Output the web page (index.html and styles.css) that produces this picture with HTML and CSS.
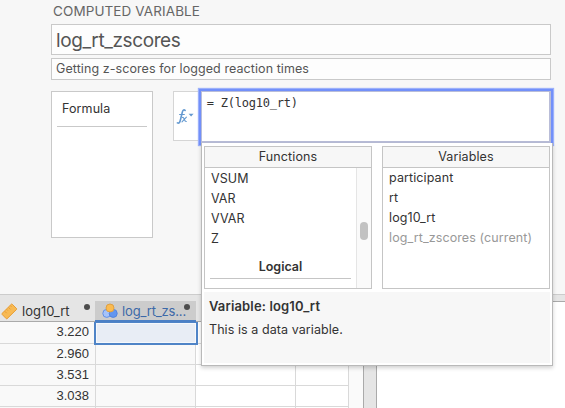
FILE: index.html
```html
<!DOCTYPE html>
<html lang="en">
<head>
<meta charset="utf-8">
<title>Computed variable</title>
<link rel="stylesheet" href="styles.css">
</head>
<body>
<section class="editor">
  <h1 class="heading"><span>COMPUTED VARIABLE</span></h1>
  <div class="field name"><span>log_rt_zscores</span></div>
  <div class="field desc"><span>Getting z-scores for logged reaction times</span></div>
  <div class="work">
    <div class="options"><div class="option"><span>Formula</span></div></div>
    <div class="fx">
      <svg width="18" height="20" viewBox="0 0 18 20">
        <g fill="none" stroke="#6499d0" stroke-linecap="round">
          <path d="M9.1 3.4C7.8 2.3 6.8 3.3 6.3 5.3L4.2 13.7C3.7 15.8 2.8 16.6 1.4 15.9" stroke-width="1.6"/>
          <path d="M3.6 7.5H8.3" stroke-width="1.2"/>
          <path d="M6.4 10.4C8.3 9.6 8.1 14.9 10.3 14.5M10.4 10.2L6 14.8" stroke-width="1.1"/>
        </g>
        <path d="M12.6 6.8h5l-2.5 2.8z" fill="#6499d0"/>
      </svg>
    </div>
    <div class="formula"><span>= Z(log10_rt)</span></div>
  </div>
</section>
<section class="lower">
  <div class="sheet">
    <div class="headers">
      <div class="col-head first">
        <svg width="17" height="17" viewBox="0 0 17 17">
          <path d="M11.2 1.2L15.6 5.6Q16 6 15.6 6.4L6.1 15.7Q5.7 16 5.3 15.7L1 11.3Q.7 10.9 1 10.5L10.4 1.2Q10.8.8 11.2 1.2z" fill="#f8ba54" stroke="#e79e36"/>
          <path d="M3.7 8.2l2 2M5.6 6.3l1.3 1.3M7.5 4.4l2 2M9.3 2.6l1.3 1.3" stroke="#e79e36"/>
        </svg>
        <span class="label">log10_rt</span><i class="dot"></i>
      </div>
      <div class="col-head selected">
        <svg width="16" height="16" viewBox="0 0 16 16">
          <circle cx="4.8" cy="10.4" r="4" fill="#a5c3fa" stroke="#6590e5"/>
          <circle cx="11.2" cy="10.4" r="4" fill="#6396ef" stroke="#5584dd"/>
          <circle cx="8" cy="5" r="4" fill="#fbbb50" stroke="#dda044"/>
        </svg>
        <span class="label">log_rt_zs...</span><i class="dot"></i>
      </div>
    </div>
    <div class="grid">
      <div class="num"><span>3.220</span></div><div class="calc active"></div><div></div><div></div>
      <div class="num"><span>2.960</span></div><div class="calc"></div><div></div><div></div>
      <div class="num"><span>3.531</span></div><div class="calc"></div><div></div><div></div>
      <div class="num"><span>3.038</span></div><div class="calc"></div><div></div><div></div>
      <div class="num"></div><div class="calc"></div><div></div><div></div>
    </div>
  </div>
  <div class="splitter"></div>
  <div class="results"></div>
</section>
<div class="popup">
  <div class="lists">
    <div class="list">
      <div class="list-head"><span>Functions</span></div>
      <div class="scroll">
        <div class="items">
          <div class="item">VSUM</div><div class="item">VAR</div><div class="item">VVAR</div><div class="item">Z</div>
          <div class="group">Logical</div>
        </div>
        <div class="track"><div class="thumb"></div></div>
      </div>
    </div>
    <div class="list">
      <div class="list-head"><span>Variables</span></div>
      <div class="vars">
        <div class="item">participant</div><div class="item">rt</div><div class="item">log10_rt</div><div class="item current">log_rt_zscores (current)</div>
      </div>
    </div>
  </div>
  <div class="info"><b>Variable: log10_rt</b><p>This is a data variable.</p></div>
</div>
</body>
</html>
```

FILE: styles.css
```css
* { box-sizing: border-box; }
body {
  margin: 0;
  width: 565px;
  height: 408px;
  overflow: hidden;
  position: relative;
  background: #fff;
  color: #333;
  font: 13px/20px Inter, sans-serif;
}
.editor { height: 294px; background: #f7f7f7; padding: 0 14px 0 51px; }
.heading { margin: 0; height: 24px; padding-left: 2px; font-size: 13.5px; line-height: 23px; font-weight: 400; letter-spacing: .1px; color: #666; }
.field { border: 1px solid #c9c9c9; background: #fdfdfd; color: #555; padding-left: 4px; white-space: nowrap; }
.name { height: 31px; font-size: 19px; line-height: 31px; letter-spacing: -.4px; }
.desc { height: 22px; margin-top: 3px; font-size: 12.5px; line-height: 20px; letter-spacing: .08px; }
.work { display: flex; margin-top: 11px; }
.options { width: 102px; height: 147px; border: 1px solid #c9c9c9; background: #fff; padding: 5px; margin-right: 20px; }
.option { height: 30px; border-bottom: 1px solid #c9c9c9; padding-left: 5px; line-height: 23px; font-size: 12.5px; letter-spacing: .1px; }
.fx { width: 28px; height: 50px; border: 1px solid #d5d5d5; border-right: 0; background: #fff; padding: 15px 0 0 2px; }
.formula {
  width: 351px;
  height: 52px;
  border: solid #b9bdd8;
  border-width: 1px 2px 2px 1px;
  box-shadow: 0 0 0 2px #7290fa, 0 0 1px 3px #9cb0fa;
  background: #fff;
  padding-left: 5px;
  font: 12px/23px "DejaVu Sans Mono", monospace;
  letter-spacing: -.22px;
}
.lower { display: flex; height: 114px; }
.sheet { width: 363px; background: #fafafa; }
.headers { display: flex; height: 28px; background: #e5e5e5; border-top: 1px solid #ccc; border-bottom: 1px solid #aaa; }
.col-head { display: flex; align-items: center; position: relative; height: 26px; line-height: 20px; padding-top: 6px; }
.col-head svg { flex: none; }
.first { width: 95px; padding-left: 1px; gap: 4px; }
.selected { width: 101px; margin-top: 6px; height: 21px; padding: 0 0 0 7px; gap: 4px; background: #ccc; border-bottom: 2px solid #4b80c5; color: #3c69a8; letter-spacing: -.15px; }
.dot { position: absolute; width: 6px; height: 6px; border-radius: 50%; background: #4d4d4d; right: 5px; top: 9px; }
.selected .dot { top: 3px; right: 6px; }
.grid { display: grid; grid-template-columns: 96px 100px 100px 53px; grid-template-rows: 22px 21px 21px 21px 21px; height: 86px; overflow: hidden; }
.grid > div { background: #fff; border-right: 1px solid #d9d9d9; border-bottom: 1px solid #d9d9d9; }
.grid > .num { background: #f9f9f9; text-align: right; padding-right: 6px; font-family: "Liberation Sans", sans-serif; line-height: 20px; }
.grid > .calc { background: #f9f9f9; }
.grid > .active { background: #e8edf5; outline: 2px solid #4f84c7; outline-offset: -1px; box-shadow: inset 0 0 0 2px #f5f8fc; margin: 0 -1px 0 -1px; z-index: 1; border: 0; }
.splitter { width: 14px; background: #e5e5e5; border-left: 1px solid #aaa; border-right: 1px solid #aaa; }
.results { flex: 1; border-top: 1px solid #ccc; box-shadow: inset 0 6px #e5e5e5, inset 0 7px #aaa; }
.popup {
  position: absolute;
  left: 201px;
  top: 143px;
  width: 352px;
  height: 223px;
  padding: 3px 2px 2px;
  background: #fff;
  border: 1px solid #b9b9b9;
  border-top: 0;
  box-shadow: 0 2px 4px rgba(0, 0, 0, .18);
}
.lists { display: flex; gap: 10px; }
.list { width: 168px; height: 143px; border: 1px solid #c5c5c5; }
.list-head { height: 21px; border-bottom: 1px solid #c5c5c5; background: #f7f7f7; text-align: center; line-height: 20px; font-size: 12.5px; letter-spacing: .1px; }
.scroll { display: flex; height: 120px; }
.items { width: 151px; padding: 1px 5px 0 6px; }
.item { height: 20px; line-height: 20px; font-size: 12.5px; letter-spacing: .1px; white-space: nowrap; }
.vars { padding: 0 6px; }
.current { color: #999; }
.group { height: 22px; margin: 8px 0 0 -1px; line-height: 19px; font-size: 12.5px; font-weight: 600; text-align: center; border-bottom: 1px solid #c5c5c5; }
.track { flex: 1; border-left: 1px solid #e5e5e5; background: #fafafa; padding: 54px 0 0 3px; }
.thumb { width: 8px; height: 18px; border-radius: 4px; background: #c2c2c2; }
.info { height: 71px; margin-top: 3px; background: #f7f7f7; padding: 4px 5px; }
.info b { font-weight: 600; letter-spacing: .15px; }
.info p { margin: 4px 0 0; font-size: 12.5px; letter-spacing: .07px; }
```
